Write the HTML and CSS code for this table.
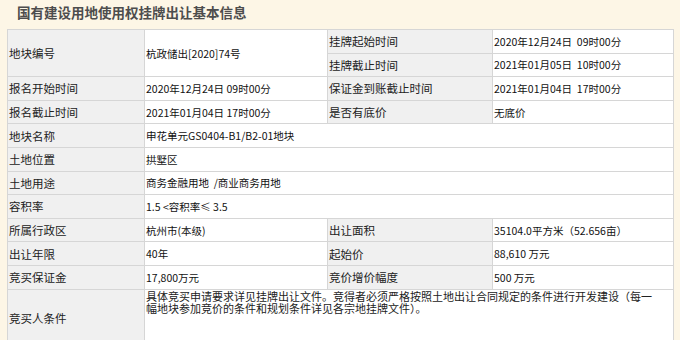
FILE: index.html
```html
<!DOCTYPE html>
<html lang="zh-CN">
<head>
<meta charset="utf-8">
<title>国有建设用地使用权挂牌出让基本信息</title>
<link rel="stylesheet" href="styles.css">
</head>
<body>
<div class="page">
  <div class="title">国有建设用地使用权挂牌出让基本信息</div>
  <table class="info">
    <colgroup>
      <col class="c1"><col class="c2"><col class="c3"><col class="c4">
    </colgroup>
    <tr>
      <td class="lbl" rowspan="2">地块编号</td>
      <td class="val" rowspan="2">杭政储出[2020]74号</td>
      <td class="lbl">挂牌起始时间</td>
      <td class="val">2020年12月24日&nbsp; 09时00分</td>
    </tr>
    <tr>
      <td class="lbl">挂牌截止时间</td>
      <td class="val">2021年01月05日&nbsp; 10时00分</td>
    </tr>
    <tr>
      <td class="lbl">报名开始时间</td>
      <td class="val">2020年12月24日 09时00分</td>
      <td class="lbl">保证金到账截止时间</td>
      <td class="val">2021年01月04日&nbsp; 17时00分</td>
    </tr>
    <tr>
      <td class="lbl">报名截止时间</td>
      <td class="val">2021年01月04日 17时00分</td>
      <td class="lbl">是否有底价</td>
      <td class="val">无底价</td>
    </tr>
    <tr>
      <td class="lbl">地块名称</td>
      <td class="val" colspan="3">申花单元GS0404-B1/B2-01地块</td>
    </tr>
    <tr>
      <td class="lbl">土地位置</td>
      <td class="val" colspan="3">拱墅区</td>
    </tr>
    <tr>
      <td class="lbl">土地用途</td>
      <td class="val" colspan="3">商务金融用地&nbsp; /商业商务用地</td>
    </tr>
    <tr>
      <td class="lbl">容积率</td>
      <td class="val" colspan="3">1.5 &lt;容积率≤ 3.5</td>
    </tr>
    <tr>
      <td class="lbl">所属行政区</td>
      <td class="val">杭州市(本级)</td>
      <td class="lbl">出让面积</td>
      <td class="val">35104.0平方米（52.656亩）</td>
    </tr>
    <tr>
      <td class="lbl">出让年限</td>
      <td class="val">40年</td>
      <td class="lbl">起始价</td>
      <td class="val">88,610 万元</td>
    </tr>
    <tr>
      <td class="lbl">竞买保证金</td>
      <td class="val">17,800万元</td>
      <td class="lbl">竞价增价幅度</td>
      <td class="val">500 万元</td>
    </tr>
    <tr class="tall">
      <td class="lbl">竞买人条件</td>
      <td class="val top" colspan="3"><div class="cond">具体竞买申请要求详见挂牌出让文件。竞得者必须严格按照土地出让合同规定的条件进行开发建设（每一幅地块参加竞价的条件和规划条件详见各宗地挂牌文件）。</div></td>
    </tr>
  </table>
</div>
</body>
</html>
```

FILE: styles.css
```css
html, body {
  margin: 0;
  padding: 0;
  background: #fdf6e6;
}
body {
  font-family: "Noto Sans CJK SC", "Noto Sans", sans-serif;
  color: #111;
}
.page {
  padding: 0 7px;
}
.title {
  height: 29px;
  line-height: 24px;
  padding-left: 10px;
  font-size: 13.5px;
  font-weight: bold;
  color: #4d4d4d;
  box-sizing: border-box;
}
.info {
  width: 666px;
  table-layout: fixed;
  border-collapse: collapse;
}
.c1 { width: 137px; }
.c2 { width: 183px; }
.c3 { width: 165px; }
.c4 { width: 181px; }
.info td {
  border: 1px solid #d6d6d6;
  height: 22.6px;
  padding: 0 1px;
  vertical-align: middle;
  white-space: nowrap;
  overflow: hidden;
}
.lbl {
  background: #f0f0f0;
  font-size: 11.5px;
  color: #222;
}
.val {
  background: #fff;
  font-size: 10.5px;
  color: #111;
}
.tall td {
  height: 57px;
}
.info td.top {
  vertical-align: top;
  white-space: normal;
  overflow: visible;
}
.cond {
  max-width: 510px;
  font-size: 11px;
  line-height: 12px;
  color: #222;
}
```
